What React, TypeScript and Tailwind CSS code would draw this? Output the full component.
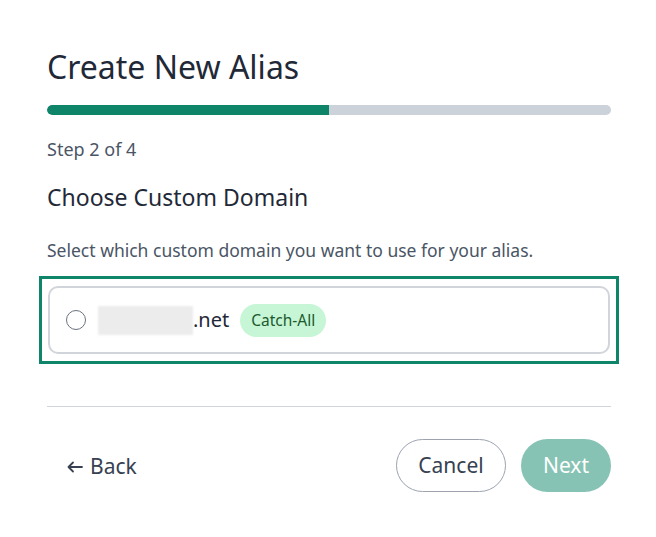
import React from 'react'

const ArrowLeft = () => (
  <svg width="16" height="12" viewBox="0 0 16 12" fill="none" stroke="currentColor" strokeWidth="1.8" strokeLinecap="round" strokeLinejoin="round">
    <path d="M15 6H2" />
    <path d="M6 1.5L1.5 6L6 10.5" />
  </svg>
)

export default function App() {
  return (
    <div className="min-h-[537px] w-[656px] bg-white font-['Noto_Sans',sans-serif] text-[#1f2937]">
      <div className="ml-[47px] w-[564px] pt-[47px]">
        <h1 className="text-[32px] leading-[40px] text-[#1f2937]">Create New Alias</h1>

        {/* progress: step 2 of 4 */}
        <div className="mt-[18px] h-[10px] w-full overflow-hidden rounded-full bg-[#cbd2da]">
          <div className="h-full w-1/2 rounded-l-full bg-[#0e8468]" />
        </div>

        <p className="mt-[22px] text-[18px] leading-[24px] text-[#4a5565]">Step 2 of 4</p>

        <h2 className="mt-[21px] text-[23px] leading-[30px] text-[#1f2937]">Choose Custom Domain</h2>

        <p className="mt-[26px] text-[17.5px] leading-[24px] text-[#4a5565]">
          Select which custom domain you want to use for your alias.
        </p>

        <div className="-mx-[8px] mt-[14px] border-[3px] border-[#0e8468] px-[6px] pt-[7px] pb-[7px]">
          <label className="flex h-[68px] items-center rounded-[10px] border-2 border-[#d1d5db] px-[16px]">
            <span className="h-[20px] w-[20px] rounded-full border-[1.5px] border-[#6b7280]" />
            <span className="ml-[12px] h-[29px] w-[95px] bg-[#ececec] blur-[1px]" />
            <span className="text-[20px] leading-[28px] text-[#1f2937]">.net</span>
            <span className="ml-[11px] rounded-full bg-[#c6f6d5] px-[11px] py-[6px] text-[15.5px] leading-[21px] text-[#1c5a2e]">
              Catch-All
            </span>
          </label>
        </div>

        <div className="mt-[42px] border-t border-[#d1d5db]" />

        <div className="mt-[32px] flex items-center justify-between">
          <button className="ml-[20px] mt-[2px] flex items-center gap-[7px] text-[21px] text-[#374151]">
            <ArrowLeft />
            Back
          </button>
          <div className="flex items-center gap-[15px]">
            <button className="h-[53px] w-[110px] rounded-full border border-[#9ca3af] text-[21px] text-[#374151]">
              Cancel
            </button>
            <button className="h-[53px] w-[90px] rounded-full bg-[#87c3b4] text-[21px] text-white">
              Next
            </button>
          </div>
        </div>
      </div>
    </div>
  )
}
